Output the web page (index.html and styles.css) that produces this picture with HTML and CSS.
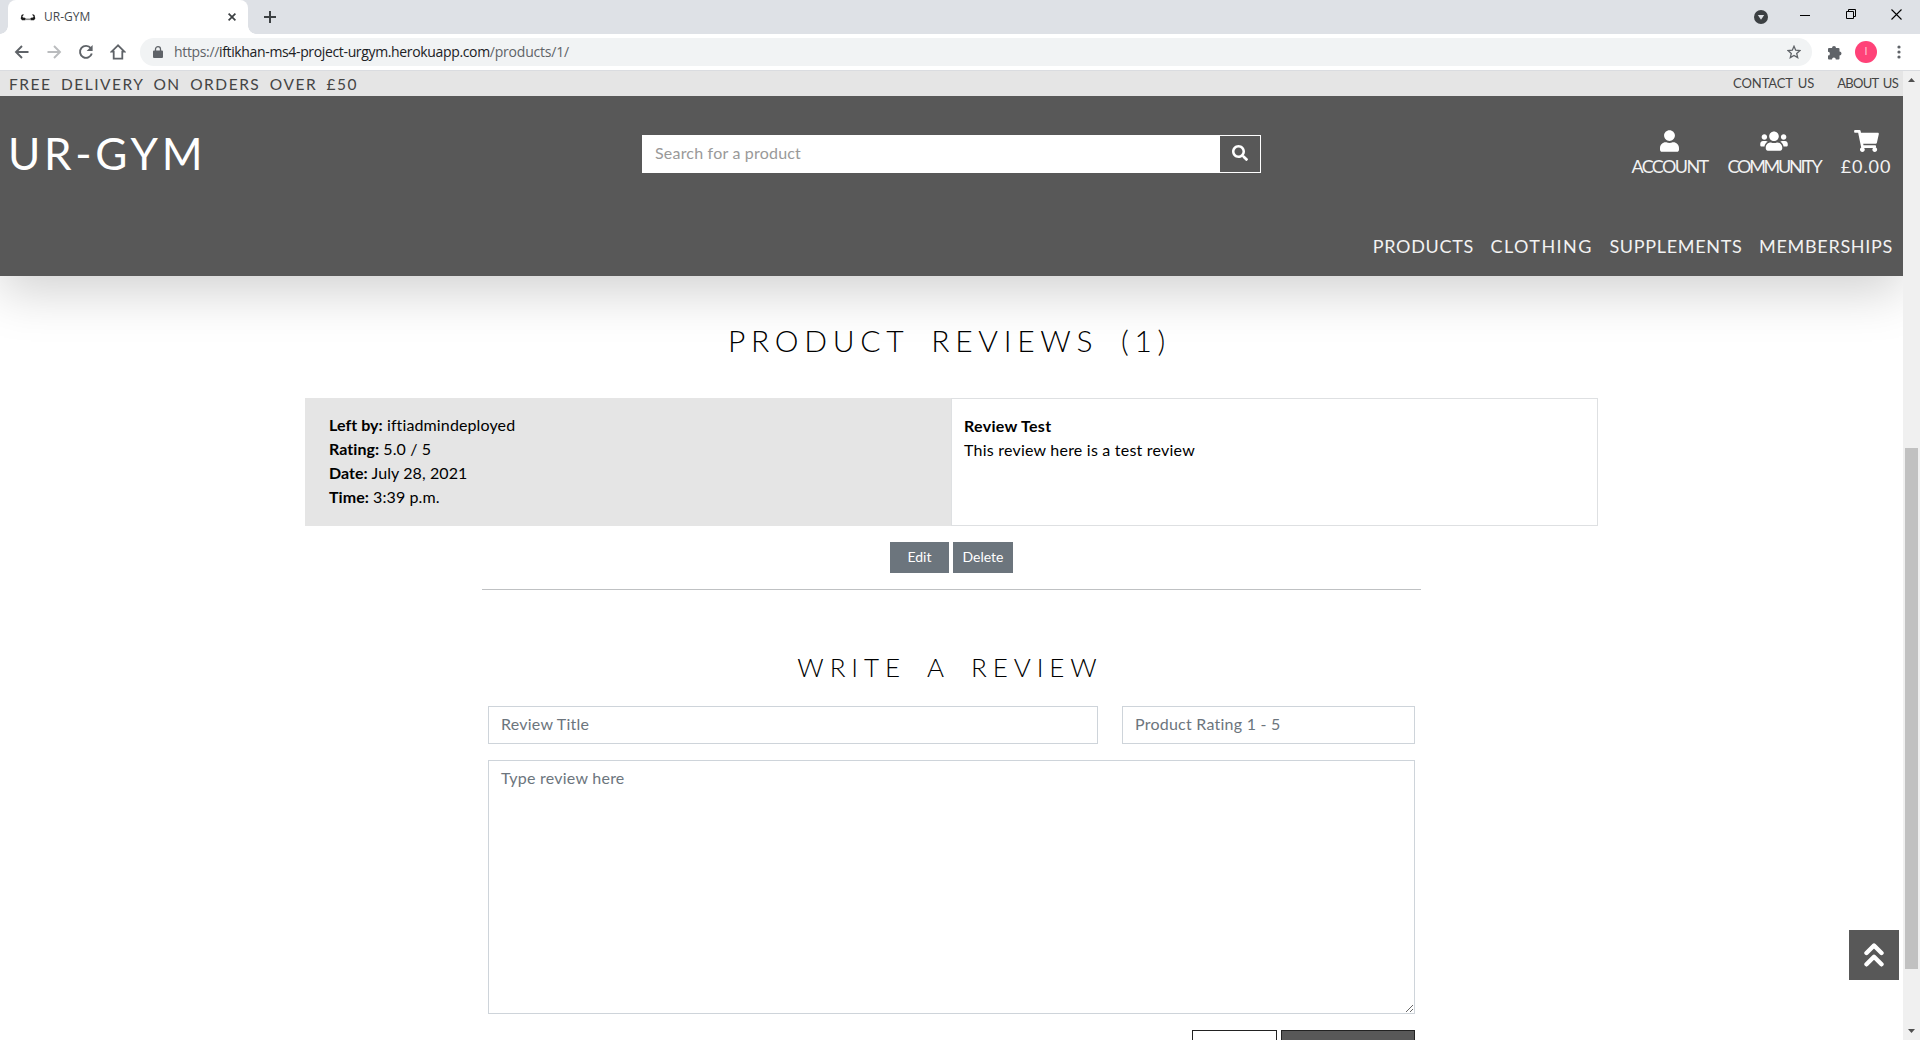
FILE: index.html
```html
<!DOCTYPE html>
<html lang="en">
<head>
<meta charset="utf-8">
<title>UR-GYM</title>
<link rel="stylesheet" href="styles.css">
</head>
<body>
<div class="tabbar">
  <div class="tab">
    <svg class="favicon" width="16" height="10" viewBox="0 0 16 10"><path d="M.7 6.500L1.500 3 3.600 2l-.3 1.600-.9.600.5 1.300 2 .2 1 1-.6 1.500H2zM15.300 6.500L14.500 3l-2.100-1 .3 1.600.9.600-.5 1.300-2 .2-1 1 .6 1.500H14z" fill="#1c1c1c"/><path d="M5.500 6.500h5v1.600h-5z" fill="#8a8a8a"/></svg>
    <span class="tab-title">UR-GYM</span>
    <svg class="tab-close" width="8" height="8" viewBox="0 0 8 8"><path d="M.6.6l6.800 6.800M7.400.6L.6 7.400" stroke="#3c4043" stroke-width="1.700"/></svg>
  </div>
  <svg class="tab-new" width="12" height="12" viewBox="0 0 12 12"><path d="M6 0v12M0 6h12" stroke="#3c4043" stroke-width="2"/></svg>
  <div class="window-controls">
    <svg width="14" height="14" viewBox="0 0 14 14"><circle cx="7" cy="7" r="7" fill="#3c4043"/><path d="M3.800 5h6.400L7 9.800z" fill="#dee1e6"/></svg>
    <svg class="win-min" width="10" height="10" viewBox="0 0 10 10"><path d="M0 5.500h10" stroke="#000"/></svg>
    <svg class="win-restore" width="10" height="10" viewBox="0 0 10 10"><path d="M.5 2.500h7v7h-7zM2.500 2.500v-2h7v7h-2" fill="none" stroke="#000"/></svg>
    <svg class="win-close" width="11" height="11" viewBox="0 0 11 11"><path d="M.5.5l10 10M10.500.5l-10 10" stroke="#000" stroke-width="1.100"/></svg>
  </div>
</div>
<div class="toolbar">
  <div class="nav-icons">
    <svg viewBox="0 0 16 16"><path d="M14.500 8H2.500M8 2L2 8l6 6" fill="none" stroke="#5f6368" stroke-width="1.900"/></svg>
    <svg viewBox="0 0 16 16"><path d="M1.500 8h12M8 2l6 6-6 6" fill="none" stroke="#babcbe" stroke-width="1.900"/></svg>
    <svg viewBox="0 0 16 16"><path d="M12.800 4.200A6 6 0 1 0 13.800 9.500" fill="none" stroke="#5f6368" stroke-width="1.900"/><path d="M14.600.9v6H8.600z" fill="#5f6368"/></svg>
    <svg viewBox="0 0 16 16"><path d="M8 1.300L1.600 7.700H3.700v6.900h8.600V7.700h2.100z" fill="none" stroke="#5f6368" stroke-width="1.800"/></svg>
  </div>
  <div class="omnibox">
    <svg width="10" height="12" viewBox="0 0 10 12"><path d="M1 4.500h8a1 1 0 0 1 1 1V11a1 1 0 0 1-1 1H1a1 1 0 0 1-1-1V5.500a1 1 0 0 1 1-1z" fill="#5f6368"/><path d="M2.500 5V3a2.500 2.300 0 0 1 5 0v2" fill="none" stroke="#5f6368" stroke-width="1.300"/></svg>
    <div class="url"><span>https://</span><span class="url-host">iftikhan-ms4-project-urgym.herokuapp.com</span><span class="url-path">/products/1/</span></div>
    <svg class="star" width="14" height="14" viewBox="0 0 14 14"><path d="M7 1.300l1.700 3.900 4.200.4-3.200 2.800 1 4.200L7 10.400l-3.700 2.200 1-4.200L1.100 5.600l4.200-.4z" fill="none" stroke="#5f6368" stroke-width="1.300"/></svg>
  </div>
  <svg class="puzzle" width="15" height="15" viewBox="0 0 15 15"><path d="M5 3a2 2 0 0 1 4 0h2.500A1 1 0 0 1 12.500 4v2.500a2 2 0 0 1 0 4V13.500a1 1 0 0 1-1 1H8.800a1.900 1.900 0 0 0-3.800 0H2a1 1 0 0 1-1-1v-2.900a1.900 1.900 0 0 0 0-3.800V4A1 1 0 0 1 2 3z" fill="#5f6368"/></svg>
  <div class="avatar">I</div>
  <svg class="dots" width="4" height="14" viewBox="0 0 4 14"><g fill="#5f6368"><circle cx="2" cy="2" r="1.600"/><circle cx="2" cy="7" r="1.600"/><circle cx="2" cy="12" r="1.600"/></g></svg>
</div>
<div class="viewport">
  <div class="page">
    <div class="strip">
      <span class="delivery">FREE DELIVERY ON ORDERS OVER £50</span>
      <a class="contact">CONTACT US</a>
      <a class="about">ABOUT US</a>
    </div>
    <header class="header">
      <div class="header-top">
        <div class="brand">UR-GYM</div>
        <div class="search">
          <input class="search-input" placeholder="Search for a product">
          <button class="search-btn"><svg width="16" height="16" viewBox="0 0 512 512"><path fill="#fff" d="M505 442.700L405.300 343c-4.500-4.500-10.600-7-17-7H372c27.600-35.300 44-79.700 44-128C416 93.100 322.900 0 208 0S0 93.100 0 208s93.100 208 208 208c48.300 0 92.700-16.400 128-44v16.300c0 6.400 2.500 12.500 7 17l99.700 99.700c9.400 9.400 24.600 9.400 33.900 0l28.300-28.300c9.400-9.400 9.400-24.600.1-34zM208 336c-70.700 0-128-57.200-128-128 0-70.700 57.200-128 128-128 70.700 0 128 57.200 128 128 0 70.700-57.200 128-128 128z"/></svg></button>
        </div>
        <div class="quick">
          <a class="account"><svg width="19" height="22" viewBox="0 0 448 512"><path fill="#fff" d="M224 256c70.700 0 128-57.300 128-128S294.700 0 224 0 96 57.300 96 128s57.300 128 128 128zm89.600 32h-16.700c-22.200 10.200-46.900 16-72.900 16s-50.600-5.800-72.900-16h-16.700C60.200 288 0 348.200 0 422.400V464c0 26.500 21.500 48 48 48h352c26.500 0 48-21.500 48-48v-41.600c0-74.200-60.200-134.400-134.400-134.400z"/></svg><span>ACCOUNT</span></a>
          <a class="community"><svg width="28" height="22" viewBox="0 0 640 512"><path fill="#fff" d="M96 224c35.300 0 64-28.700 64-64s-28.700-64-64-64-64 28.700-64 64 28.700 64 64 64zm448 0c35.300 0 64-28.700 64-64s-28.700-64-64-64-64 28.700-64 64 28.700 64 64 64zm32 32h-64c-17.600 0-33.500 7.100-45.100 18.600 40.300 22.100 68.900 62 75.100 109.400h66c17.700 0 32-14.300 32-32v-32c0-35.300-28.700-64-64-64zm-256 0c61.900 0 112-50.100 112-112S381.900 32 320 32 208 82.100 208 144s50.100 112 112 112zm76.800 32h-8.300c-20.800 10-43.900 16-68.500 16s-47.600-6-68.500-16h-8.300C179.600 288 128 339.600 128 403.200V432c0 26.500 21.500 48 48 48h288c26.500 0 48-21.500 48-48v-28.800c0-63.600-51.600-115.200-115.200-115.200zm-223.700-13.400C161.500 263.100 145.600 256 128 256H64c-35.300 0-64 28.700-64 64v32c0 17.700 14.300 32 32 32h65.900c6.300-47.400 34.900-87.300 75.200-109.400z"/></svg><span>COMMUNITY</span></a>
          <a class="basket"><svg width="25" height="22" viewBox="0 0 576 512"><path fill="#fff" d="M528.120 301.319l47.273-208C578.806 78.301 567.391 64 551.990 64H159.208l-9.166-44.810C147.758 8.021 137.930 0 126.529 0H24C10.745 0 0 10.745 0 24v16c0 13.255 10.745 24 24 24h69.883l70.248 343.435C147.325 417.100 136 435.222 136 456c0 30.928 25.072 56 56 56s56-25.072 56-56c0-15.674-6.447-29.835-16.824-40h209.647C430.447 426.165 424 440.326 424 456c0 30.928 25.072 56 56 56s56-25.072 56-56c0-22.172-12.888-41.332-31.579-50.405l5.517-24.276c3.413-15.018-8.002-29.319-23.403-29.319H218.117l-6.545-32h293.145c11.206 0 20.920-7.754 23.403-18.681z"/></svg><span>£0.00</span></a>
        </div>
      </div>
      <nav class="menu">
        <a>PRODUCTS</a><a class="clothing">CLOTHING</a><a>SUPPLEMENTS</a><a>MEMBERSHIPS</a>
      </nav>
    </header>
    <main>
      <h2 class="reviews-title">PRODUCT REVIEWS (1)</h2>
      <div class="review">
        <div class="review-meta">
          <div><b>Left by:</b> iftiadmindeployed</div>
          <div><b>Rating:</b> 5.0 / 5</div>
          <div><b>Date:</b> July 28, 2021</div>
          <div><b>Time:</b> 3:39 p.m.</div>
        </div>
        <div class="review-body">
          <b>Review Test</b>
          <div>This review here is a test review</div>
        </div>
      </div>
      <div class="review-actions"><a class="edit">Edit</a><a class="delete">Delete</a></div>
      <hr class="rule">
      <h3 class="write-title">WRITE A REVIEW</h3>
      <form class="form">
        <div class="form-row">
          <input class="field" placeholder="Review Title">
          <input class="field field-rating" placeholder="Product Rating 1 - 5">
        </div>
        <textarea class="field field-text" placeholder="Type review here"></textarea>
        <div class="form-buttons"><div class="btn-light"></div><div class="btn-dark"></div></div>
      </form>
    </main>
  </div>
  <div class="scrollbar">
    <svg width="7" height="4" viewBox="0 0 7 4"><path d="M0 4L3.500 0 7 4z" fill="#505050"/></svg>
    <div class="thumb"></div>
    <svg class="down" width="7" height="4" viewBox="0 0 7 4"><path d="M0 0l3.500 4L7 0z" fill="#505050"/></svg>
  </div>
  <a class="to-top"><svg width="20" height="26" viewBox="0 0 20 26"><path d="M2.500 11L10 3.500l7.500 7.500M2.500 22.300l7.500-7.500 7.500 7.500" fill="none" stroke="#fff" stroke-width="4.400" stroke-linejoin="round" stroke-linecap="round"/></svg></a>
</div>
</body>
</html>
```
FILE: styles.css
```css
* { box-sizing: border-box; }
body { margin: 0; height: 1040px; overflow: hidden; display: flex; flex-direction: column; background: #fff; color: #000; font: 400 16px/24px Lato, sans-serif; }
svg { display: block; flex: none; }

.tabbar { height: 34px; flex: none; display: flex; align-items: center; background: #dee1e6; padding-left: 8px; }
.tab { position: relative; width: 240px; height: 34px; display: flex; align-items: center; padding: 0 12px; background: #fff; border-radius: 8px 8px 0 0; }
.tab::before, .tab::after { content: ""; position: absolute; bottom: 0; width: 8px; height: 8px; }
.tab::before { left: -8px; background: radial-gradient(circle at 0 0, transparent 7.5px, #fff 8px); }
.tab::after { right: -8px; background: radial-gradient(circle at 100% 0, transparent 7.5px, #fff 8px); }
.tab-title { margin-left: 8px; padding-bottom: 1px; flex: 1; font: 400 12px "Open Sans", sans-serif; color: #45494d; }
.tab-new { margin-left: 16px; }
.window-controls { margin-left: auto; display: flex; align-items: center; padding-right: 18px; }
.win-min { margin: -5px 0 0 32px; }
.win-restore { margin: -6px 0 0 36px; }
.win-close { margin: -6px 0 0 35px; }

.toolbar { height: 37px; flex: none; display: flex; align-items: center; border-bottom: 1px solid #dadce0; padding-left: 14px; }
.nav-icons { display: flex; gap: 16px; width: 126px; }
.nav-icons svg { width: 16px; height: 16px; }
.omnibox { width: 1672px; height: 28px; display: flex; align-items: center; padding: 0 11px 0 13px; border-radius: 14px; background: #f1f3f4; }
.url { display: flex; margin-left: 11px; font: 400 14px/20px "Open Sans", sans-serif; letter-spacing: -0.35px; color: #5f6368; }
.url-host { color: #202124; }
.url-path { letter-spacing: -0.2px; }
.star { margin-left: auto; }
.puzzle { margin-left: 15px; }
.avatar { margin-left: 13px; width: 22px; height: 22px; border-radius: 50%; background: #ff4278; color: #ffc4d6; text-align: center; font: 400 11px/22px Roboto, sans-serif; }
.dots { margin-left: 20px; }

.viewport { position: relative; flex: 1; min-height: 0; display: flex; }
.page { width: 1903px; overflow: hidden; }
.strip { position: relative; z-index: 1; height: 25px; display: flex; align-items: center; background: #e5e5e5; color: #444; padding: 0 5px 0 9px; }
.delivery { flex: 1; font-size: 15.500px; letter-spacing: 1.520px; word-spacing: 4px; color: #444; }
.contact, .about { font-size: 13px; padding-bottom: 1px; word-spacing: 2px; }
.contact { letter-spacing: -0.1px; margin-right: 23px; }
.about { letter-spacing: -0.7px; }

.header { position: relative; height: 180px; background: #585858; color: #fff; box-shadow: 0 16px 48px rgba(0, 0, 0, .18); }
.header-top { height: 112px; display: grid; grid-template-columns: 642px 619px 1fr; }
.brand { padding: 30px 0 0 8px; font-size: 44px; line-height: 54px; letter-spacing: 3.700px; }
.search { height: 38px; margin-top: 39px; display: flex; }
.search-input { width: 578px; height: 38px; border: 0; padding: 0 13px 3px; background: #fff; font: 400 16px Lato, sans-serif; letter-spacing: .2px; }
.search-input::placeholder { color: #999; }
.search-btn { width: 41px; height: 38px; padding: 0 0 2px; display: flex; align-items: center; justify-content: center; background: #585858; border: 1px solid #fff; border-left: 0; }
.quick { display: flex; justify-content: flex-end; padding: 34px 11px 0 0; gap: 19px; font-weight: 400; font-size: 18px; line-height: 22px; color: #f2f2f2; }
.quick a { display: flex; flex-direction: column; align-items: center; gap: 3px; white-space: nowrap; }
.account { width: 77px; letter-spacing: -1.6px; }
.community { width: 94px; letter-spacing: -2.3px; }
.basket { width: 52px; letter-spacing: .9px; }
.menu { display: flex; justify-content: flex-end; gap: 16.500px; padding: 25px 10px 0 0; font-weight: 400; font-size: 18px; line-height: 26px; letter-spacing: .7px; color: #f2f2f2; }
.clothing { letter-spacing: 1.450px; }

main { display: flex; flex-direction: column; align-items: center; }
.reviews-title, .write-title { margin: 0; font-weight: 300; word-spacing: 9px; }
.reviews-title { margin-top: 44px; padding-right: 4px; font-size: 30px; line-height: 40px; letter-spacing: 5.700px; }
.write-title { margin-top: 59px; padding-right: 3px; font-size: 26px; line-height: 36px; letter-spacing: 5.900px; }
.review { width: 1293px; height: 128px; margin-top: 38px; display: grid; grid-template-columns: 646px 647px; }
.review b { font-weight: 700; letter-spacing: .05px; }
.review-meta { background: #e5e5e5; padding: 15px 24px; letter-spacing: .1px; }
.review-meta div:first-child { letter-spacing: .12px; }
.review-body { border: 1px solid #dee0e2; padding: 15px 12px; letter-spacing: .22px; }
.review-body b { letter-spacing: .3px; }
.review-actions { display: flex; gap: 4px; margin-top: 16px; font-weight: 400; font-size: 14px; line-height: 30px; color: #fff; text-align: center; }
.review-actions a { height: 31px; background: #6c757d; }
.edit { width: 59px; }
.delete { width: 60px; }
.rule { width: 939px; height: 1px; margin: 16px 0 0; border: 0; background: #bfc1c3; }
.form { width: 927px; margin-top: 21px; }
.form-row { display: grid; grid-template-columns: 610px 293px; gap: 24px; }
.field { display: block; height: 38px; padding: 0 12px 3px; border: 1px solid #ced4da; background: #fff; font: 400 16px/24px Lato, sans-serif; letter-spacing: .24px; }
.field::placeholder { color: #6c757d; }
.field-text { width: 927px; height: 254px; margin-top: 16px; padding: 5px 12px; }
.form-buttons { display: flex; justify-content: flex-end; gap: 4px; margin-top: 16px; }
.btn-light, .btn-dark { height: 38px; border: 1px solid #222; }
.btn-light { width: 85px; }
.btn-dark { width: 134px; background: #585858; }

.scrollbar { width: 17px; display: flex; flex-direction: column; align-items: center; padding: 7px 0 7px; background: #f0f0f0; }
.thumb { width: 13px; height: 521px; margin-top: 366px; background: #c1c1c1; }
.down { margin-top: auto; }
.to-top { position: absolute; left: 1849px; top: 859px; width: 50px; height: 50px; display: flex; align-items: center; justify-content: center; background: #585858; }
```
